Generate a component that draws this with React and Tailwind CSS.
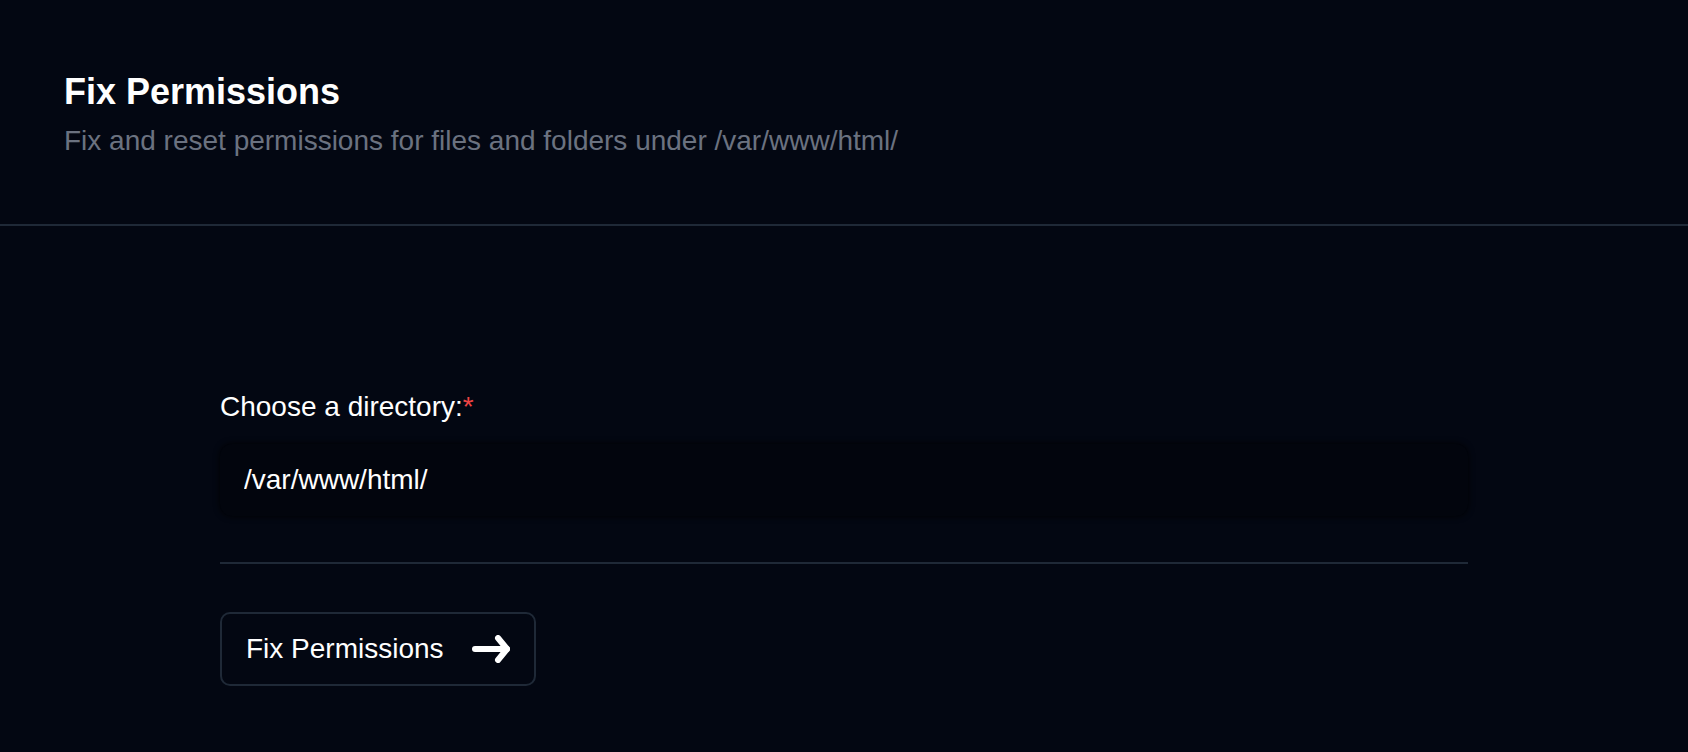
import React, { useState } from "react";

const ArrowIcon = () => (
  <svg width="38" height="28" viewBox="0 0 38 28" fill="none" stroke="currentColor" strokeWidth="6" strokeLinecap="round" strokeLinejoin="round">
    <path d="M3 14h32" />
    <path d="M26 3l9 11-9 11" />
  </svg>
);

const App = () => {
  const [directory, setDirectory] = useState("/var/www/html/");

  return (
    <div className="min-h-screen bg-[#030712] text-white" style={{ fontFamily: '"Liberation Sans", Arial, sans-serif' }}>
      {/* page header */}
      <div className="px-[64px] pt-[72px] pb-[62px] border-b-2 border-[#1f2937]">
        <h1 className="text-[36px] leading-[40px] font-bold">Fix Permissions</h1>
        <p className="mt-[8px] text-[28px] leading-[42px] text-[#6b7280]">
          Fix and reset permissions for files and folders under /var/www/html/
        </p>
      </div>

      <div className="w-[1248px] mx-auto pt-[160px]">
        <label className="block text-[28px] leading-[42px]">
          Choose a directory:<span className="text-[#ef4444]">*</span>
        </label>
        <input
          className="mt-[16px] w-full h-[72px] px-[24px] rounded-[12px] bg-[#02050d] text-[28px] text-white outline-none shadow-[0_0_6px_rgba(0,0,0,0.9)]"
          value={directory}
          onChange={(e) => setDirectory(e.target.value)}
        />
        <div className="mt-[46px] h-[2px] bg-[#1f2937]" />
        <button className="mt-[48px] h-[74px] px-[24px] flex items-center gap-[28px] rounded-[10px] border-2 border-[#1f2937] text-[28px]">
          Fix Permissions
          <ArrowIcon />
        </button>
      </div>
    </div>
  );
};

export default App;
